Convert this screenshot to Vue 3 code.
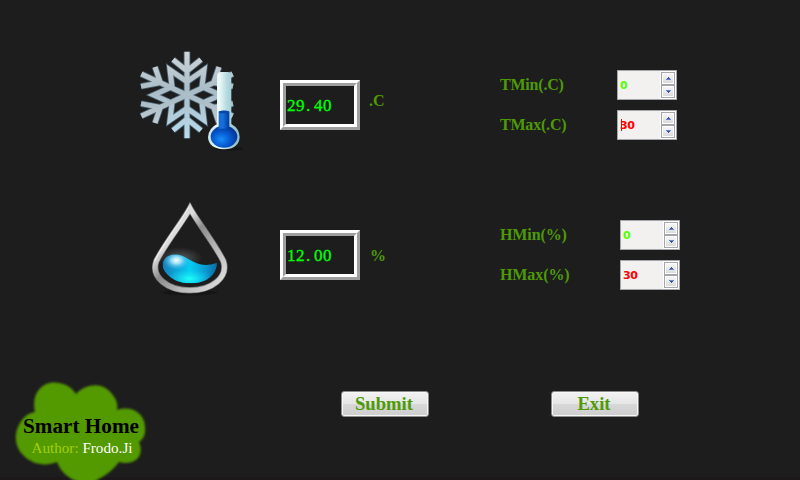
<script setup>
import { ref } from 'vue'

const rows = ref([
  {
    kind: 'temperature', whole: '29', fraction: '40', unit: '.C',
    limits: [
      { label: 'TMin(.C)', value: 0, tone: 'low' },
      { label: 'TMax(.C)', value: 30, tone: 'high', caret: true },
    ],
  },
  {
    kind: 'humidity', whole: '12', fraction: '00', unit: '%',
    limits: [
      { label: 'HMin(%)', value: 0, tone: 'low' },
      { label: 'HMax(%)', value: 30, tone: 'high' },
    ],
  },
])
const mirrors = ['scale(1 1)', 'scale(-1 1)', 'scale(1 -1)', 'scale(-1 -1)']
</script>

<template>
  <main class="panel">
    <section v-for="row in rows" :key="row.kind" class="row" :class="row.kind">
      <svg v-if="row.kind === 'temperature'" class="picture" viewBox="0 0 360 360">
        <defs>
          <linearGradient id="ice" gradientUnits="userSpaceOnUse" x1="0" y1="-130" x2="0" y2="130">
            <stop offset="0" stop-color="#d0d4d8" />
            <stop offset=".45" stop-color="#aabcc6" />
            <stop offset="1" stop-color="#b9dcec" />
          </linearGradient>
          <linearGradient id="glass">
            <stop offset="0" stop-color="#c5e4ea" />
            <stop offset=".35" stop-color="#eefafa" />
            <stop offset=".6" stop-color="#b4d9df" />
            <stop offset="1" stop-color="#8bbcc6" />
          </linearGradient>
          <linearGradient id="column">
            <stop offset="0" stop-color="#1c68c8" />
            <stop offset=".4" stop-color="#1270dc" />
            <stop offset="1" stop-color="#023a9c" />
          </linearGradient>
          <radialGradient id="bulb" cx=".4" cy=".62" r=".6">
            <stop offset="0" stop-color="#188df8" />
            <stop offset=".55" stop-color="#0759d0" />
            <stop offset="1" stop-color="#03369a" />
          </radialGradient>
          <g id="ice-lines">
            <path d="M0-130V130M-42-106L0-72L42-106M-42 106L0 72L42 106" />
            <path d="M0-40L51-75L45-25L100 0L45 25L51 75L0 40L-51 75L-45 25L-100 0L-45-25L-51-75Z" />
            <path v-for="m in mirrors" :key="m" :transform="m" d="M0 0L-137-63M-96-84L-80-37L-138-26" />
          </g>
        </defs>
        <g transform="translate(171 165)" fill="none" stroke-linejoin="miter">
          <use href="#ice-lines" stroke="#496071" stroke-width="20" />
          <use href="#ice-lines" stroke="url(#ice)" stroke-width="15" />
        </g>
        <ellipse cx="298" cy="326" rx="42" ry="6" fill="#151515" />
        <path d="M261 108Q261 96 273 96H292Q304 96 304 108V252Q329 266 329 292Q327 327 282 328Q236 326 234 292Q235 265 261 252Z" fill="url(#glass)" />
        <ellipse cx="282" cy="290" rx="40" ry="33" fill="url(#bulb)" />
        <path d="M266 215Q282 208 298 215V266H266Z" fill="url(#column)" />
        <ellipse cx="282" cy="216" rx="16" ry="4" fill="#0647a6" />
      </svg>

      <svg v-else class="picture" viewBox="0 0 360 330">
        <defs>
          <linearGradient id="chrome" x1="0" y1="0" x2="1" y2="1">
            <stop offset="0" stop-color="#c9c9c9" />
            <stop offset=".3" stop-color="#dedede" />
            <stop offset=".45" stop-color="#8c8c8c" />
            <stop offset=".65" stop-color="#b4b4b4" />
            <stop offset="1" stop-color="#e4e4e4" />
          </linearGradient>
          <linearGradient id="water">
            <stop offset="0" stop-color="#1976b5" />
            <stop offset=".5" stop-color="#06cdf2" />
            <stop offset=".75" stop-color="#0a9bd3" />
            <stop offset="1" stop-color="#0c5d98" />
          </linearGradient>
          <radialGradient id="shine">
            <stop offset="0" stop-color="#fff" />
            <stop offset=".35" stop-color="#c3efff" stop-opacity=".8" />
            <stop offset="1" stop-color="#39aee4" stop-opacity="0" />
          </radialGradient>
          <radialGradient id="depth">
            <stop offset="0" stop-color="#1ffff7" />
            <stop offset="1" stop-color="#14cff0" stop-opacity="0" />
          </radialGradient>
          <radialGradient id="mist">
            <stop offset="0" stop-color="#899ba2" stop-opacity=".55" />
            <stop offset="1" stop-color="#777" stop-opacity="0" />
          </radialGradient>
          <clipPath id="wave">
            <path d="M98 224C101 193 136 185 168 203C208 225 221 230 261 219C260 253 231 280 181 280C136 280 98 251 98 224Z" />
          </clipPath>
        </defs>
        <ellipse cx="180" cy="308" rx="82" ry="8" fill="#151515" />
        <path d="M180 55C158 96 106 160 79 213C62 262 113 301 179 301C246 301 296 262 280 213C254 160 202 96 180 55Z" fill="none" stroke="#727272" stroke-width="19" />
        <path d="M180 55C158 96 106 160 79 213C62 262 113 301 179 301C246 301 296 262 280 213C254 160 202 96 180 55Z" fill="none" stroke="url(#chrome)" stroke-width="15" />
        <path d="M178 49C156 90 102 157 75 211" fill="none" stroke="#f1f1f1" stroke-width="3" />
        <ellipse cx="151" cy="205" rx="68" ry="34" fill="url(#mist)" />
        <g clip-path="url(#wave)">
          <path d="M90 180H270V290H90Z" fill="url(#water)" />
          <ellipse cx="178" cy="266" rx="67" ry="30" fill="url(#depth)" />
          <ellipse cx="139" cy="211" rx="40" ry="29" fill="url(#shine)" />
        </g>
      </svg>

      <div class="readout">
        <div class="reading">{{ row.whole }}<span class="point">.</span>{{ row.fraction }}</div>
      </div>
      <span class="unit">{{ row.unit }}</span>

      <div class="limits">
        <div v-for="limit in row.limits" :key="limit.label" class="limit">
          <span class="label">{{ limit.label }}</span>
          <div class="spin">
            <span class="value" :class="[limit.tone, { caret: limit.caret }]">{{ limit.value }}</span>
            <div class="steps">
              <span class="step"><svg viewBox="0 0 7 4" shape-rendering="crispEdges"><path d="M3 0H4V1H5V2H6V3H1V2H2V1H3Z" fill="#43518f" /><path d="M1 2H6V3H1Z" fill="#6386d5" /></svg></span>
              <span class="step"><svg viewBox="0 0 7 4" shape-rendering="crispEdges"><path d="M1 0H6V1H5V2H4V3H3V2H2V1H1Z" fill="#43518f" /><path d="M1 0H6V1H1Z" fill="#6386d5" /></svg></span>
            </div>
          </div>
        </div>
      </div>
    </section>

    <footer class="footer">
      <svg class="brand" viewBox="0 0 160 100">
        <defs>
          <filter id="soften"><feGaussianBlur stdDeviation=".8" /></filter>
        </defs>
        <path filter="url(#soften)" fill="#529903" d="M35 32C31 12 43 2 55 2.500C66 3 72 8 76 14C88 2 104 3 112 14C117 20 118 25 117 30C131 25 145 33 145 47C146 54 143 60 139 62C145 76 135 86 119 82C110 94 103 96 94 102H78C69 98 62 94 57 82C45 87 32 84 24 76C15 68 13 54 20 43C24 36 29 33 35 32Z" />
        <text class="title" x="23" y="53" textLength="116" lengthAdjust="spacingAndGlyphs">Smart Home</text>
        <text class="author" x="31.500" y="73" textLength="101" lengthAdjust="spacingAndGlyphs">Author: <tspan class="name">Frodo.Ji</tspan></text>
      </svg>
      <div class="actions">
        <button type="button">Submit</button>
        <button type="button">Exit</button>
      </div>
    </footer>
  </main>
</template>

<style>
body { background: #1d1d1d; overflow: hidden; }
</style>

<style scoped>
.panel {
  box-sizing: border-box;
  width: 800px;
  height: 480px;
  padding-top: 40px;
  display: flex;
  flex-direction: column;
  background: linear-gradient(#1d1d1d 477px, #1c181a 477px);
  font-family: "Liberation Serif", serif;
  color: #4e9a06;
}
.row {
  height: 150px;
  display: grid;
  grid-template-columns: 150px 90px 130px 1fr;
  align-items: start;
  padding-left: 130px;
}
.picture { width: 120px; height: 120px; }
.humidity .picture { height: 110px; }
.readout {
  box-sizing: border-box;
  width: 80px;
  height: 50px;
  margin-top: 40px;
  border: 3px solid;
  border-color: #fff #9f9f9f #9f9f9f #fff;
}
.reading {
  box-sizing: border-box;
  height: 44px;
  border: 3px solid;
  border-color: #9f9f9f #fff #fff #9f9f9f;
  padding-left: 1px;
  font-size: 17px;
  line-height: 39px;
  letter-spacing: .5px;
  color: #00ff00;
  -webkit-text-stroke: .35px #00ff00;
  white-space: nowrap;
}
.point { display: inline-block; width: 9px; padding-left: 1px; box-sizing: border-box; line-height: 1; }
.unit { margin-top: 52px; font-size: 16px; font-weight: 700; line-height: 18px; }
.temperature .unit { margin-left: -1px; }
.humidity .unit { margin-top: 57px; }
.limits { padding-top: 30px; display: flex; flex-direction: column; gap: 10px; }
.limit { display: flex; height: 30px; }
.label { width: 117px; font-size: 16px; font-weight: 700; line-height: 30px; letter-spacing: -.2px; }
.humidity .label { width: 120px; letter-spacing: -.1px; }
.spin {
  box-sizing: border-box;
  width: 60px;
  height: 30px;
  display: flex;
  justify-content: space-between;
  border: 1px solid #a5a6ac;
  background: #f2f1f0;
}
.value {
  padding-left: 2px;
  font: 700 11px/30px "DejaVu Sans", sans-serif;
  letter-spacing: -.5px;
}
.low { color: #55ff00; }
.high { color: #f00; }
.caret { background: linear-gradient(#f00, #f00) 3px 8px / 1px 12px no-repeat; }
.steps { display: flex; flex-direction: column; padding: 1px; background: #fff; }
.step {
  box-sizing: border-box;
  width: 14px;
  height: 13px;
  display: grid;
  place-items: center;
  border: 1px solid #a5a6ac;
  box-shadow: inset 0 0 0 1px #fff;
  background: linear-gradient(#fafafa, #d8d8d8);
}
.step svg { width: 7px; height: 4px; }
.footer { display: flex; height: 100px; margin-top: auto; }
.brand { width: 160px; height: 100px; flex: none; }
.title { font-size: 21px; font-weight: 700; fill: #000; }
.author { font-size: 15px; fill: #a1d007; }
.name { fill: #fff; }
.actions { display: flex; gap: 122px; padding: 11px 0 0 181px; align-items: flex-start; }
button {
  box-sizing: border-box;
  width: 88px;
  height: 26px;
  padding: 0 2px 0 0;
  border: 1px solid #8b8b8b;
  border-radius: 3px;
  box-shadow: inset 0 0 0 1px #f7f7f7;
  background: linear-gradient(#f2f2f2, #e6e6e6 48%, #d8d8d8 50%, #cecece);
  font: 700 18.67px/24px "Liberation Serif", serif;
  color: #4e9a06;
}
</style>
